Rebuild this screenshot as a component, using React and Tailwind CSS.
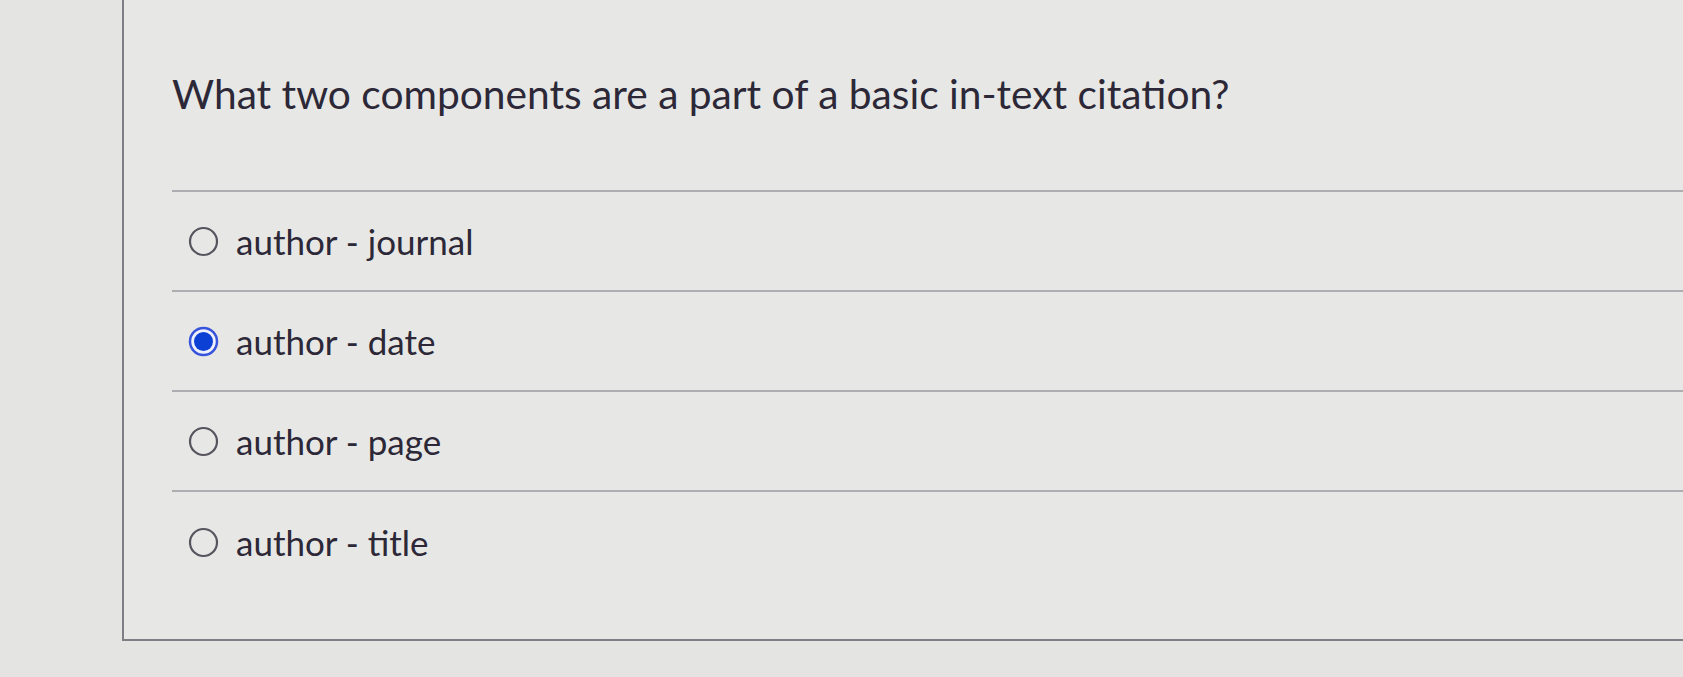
import React, { useState } from 'react'

const options = [
  { id: 'journal', label: 'author - journal' },
  { id: 'date', label: 'author - date' },
  { id: 'page', label: 'author - page' },
  { id: 'title', label: 'author - title' },
]

const Radio = ({ checked }) => (
  <svg width="31" height="31" viewBox="0 0 31 31" className="shrink-0">
    {checked ? (
      <>
        <circle cx="15.5" cy="15.5" r="13.5" fill="#eef0fb" stroke="#3654dc" strokeWidth="2.5" />
        <circle cx="15.5" cy="15.5" r="9.5" fill="#0c3fd4" />
      </>
    ) : (
      <circle cx="15.5" cy="15.5" r="13.5" fill="none" stroke="#58545f" strokeWidth="2.2" />
    )}
  </svg>
)

export default function App() {
  const [answer, setAnswer] = useState('date')

  return (
    <div
      className="w-full h-[677px] overflow-hidden bg-[#e4e4e2] pl-[122px]"
      style={{ fontFamily: 'Lato, "Open Sans", sans-serif' }}
    >
      {/* question card */}
      <div className="h-[641px] border-l-2 border-b-2 border-[#7f7e84] bg-[#e7e7e5] pl-[48px] pt-[70px]">
        <h1 className="text-[40.7px] leading-[48px] text-[#2c2837] font-normal">
          What two components are a part of a basic in-text citation?
        </h1>

        <div className="mt-[72px] border-t-2 border-[#aeadb1]">
          {options.map((opt, i) => (
            <label
              key={opt.id}
              onClick={() => setAnswer(opt.id)}
              className={`flex items-center gap-[17px] pl-[16px] h-[100px] cursor-pointer ${
                i < options.length - 1 ? 'border-b-2 border-[#aeadb1]' : ''
              }`}
            >
              <Radio checked={answer === opt.id} />
              <span className="text-[35px] leading-[44px] text-[#2c2837]">{opt.label}</span>
            </label>
          ))}
        </div>
      </div>
    </div>
  )
}
